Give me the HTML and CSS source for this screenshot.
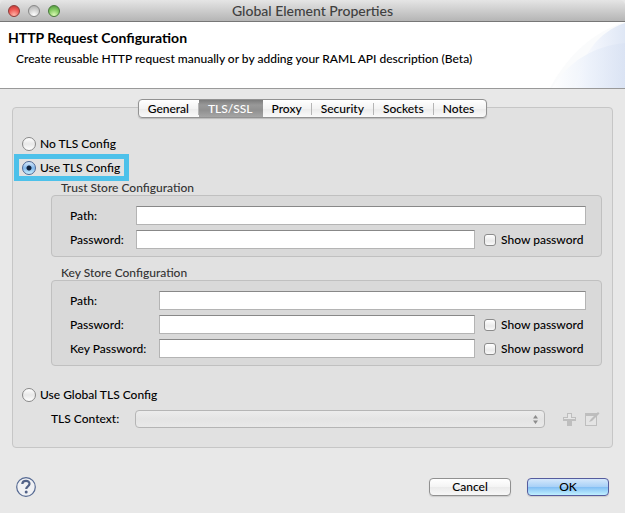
FILE: index.html
```html
<!DOCTYPE html>
<html lang="en">
<head>
<meta charset="utf-8">
<title>Global Element Properties</title>
<link rel="stylesheet" href="styles.css">
</head>
<body>
<div class="window">
  <header class="titlebar">
    <div class="lights">
      <button class="light light-close" aria-label="Close"></button>
      <button class="light light-min" aria-label="Minimize"></button>
      <button class="light light-zoom" aria-label="Zoom"></button>
    </div>
    <span class="window-title">Global Element Properties</span>
  </header>
  <section class="banner">
    <svg class="swoosh" width="75" height="66" viewBox="0 0 75 66" aria-hidden="true">
      <defs>
        <linearGradient id="fade"><stop offset="0" stop-color="#fff"/><stop offset=".5" stop-color="#eff3fb"/><stop offset="1" stop-color="#dfe7f5"/></linearGradient>
        <linearGradient id="deep"><stop offset="0" stop-color="#fff"/><stop offset=".5" stop-color="#eaf0fa"/><stop offset="1" stop-color="#d9e2f3"/></linearGradient>
      </defs>
      <path d="M0 66C16 36 42 10 75 0V66Z" fill="#fafbfc"/>
      <path d="M24 66C31 34 48 10 75 1V66Z" fill="url(#fade)"/>
      <path d="M2 66C18 40 43 24 75 21V66Z" fill="url(#deep)" opacity=".75"/>
    </svg>
    <h1>HTTP Request Configuration</h1>
    <p>Create reusable HTTP request manually or by adding your RAML API description (Beta)</p>
  </section>
  <main class="content">
    <nav class="tabs">
      <button class="tab">General</button>
      <button class="tab active">TLS/SSL</button>
      <button class="tab">Proxy</button>
      <button class="tab">Security</button>
      <button class="tab">Sockets</button>
      <button class="tab">Notes</button>
    </nav>
    <form class="panel" id="config">
      <label class="option"><input type="radio" name="tls"><span>No TLS Config</span></label>
      <label class="option highlighted"><input type="radio" name="tls" checked><span>Use TLS Config</span></label>
      <section class="store">
        <h2>Trust Store Configuration</h2>
        <div class="group trust">
          <label for="tpath">Path:</label><input class="field wide" id="tpath" type="text">
          <label for="tpass">Password:</label><input class="field" id="tpass" type="password">
          <label class="show"><input type="checkbox"><span>Show password</span></label>
        </div>
      </section>
      <section class="store">
        <h2>Key Store Configuration</h2>
        <div class="group key">
          <label for="kpath">Path:</label><input class="field wide" id="kpath" type="text">
          <label for="kpass">Password:</label><input class="field" id="kpass" type="password">
          <label class="show"><input type="checkbox"><span>Show password</span></label>
          <label for="kkey">Key Password:</label><input class="field" id="kkey" type="password">
          <label class="show"><input type="checkbox"><span>Show password</span></label>
        </div>
      </section>
      <label class="option global"><input type="radio" name="tls"><span>Use Global TLS Config</span></label>
      <div class="context">
        <label for="context">TLS Context:</label>
        <div class="select-wrap">
          <select id="context" disabled><option></option></select>
          <svg class="arrows" width="5" height="9" viewBox="0 0 5 9" aria-hidden="true"><path d="M2.500 0L5 3.500H0ZM0 5.500H5L2.500 9Z" fill="#8c8c8c"/></svg>
        </div>
        <button class="tool" type="button" aria-label="Add" disabled><svg width="14" height="14" viewBox="0 0 14 14"><path d="M5 1H10V5H14V9H10V14H5V9H1V5H5Z" fill="#bebebe"/><path d="M6 2H9V6H13V7H2V6H6Z" fill="#e6e6e6"/></svg></button>
        <button class="tool" type="button" aria-label="Edit" disabled><svg width="16" height="14" viewBox="0 0 16 14"><path d="M1 1H13V14H1Z" fill="#bebebe"/><path d="M2 4H12V13H2Z" fill="#e4e4e4"/><path d="M5 10L7 7L14 0L15.500 1.500L8 9Z" fill="#bcbcbc"/></svg></button>
      </div>
    </form>
  </main>
  <footer class="footer">
    <button class="help" aria-label="Help"><svg width="20" height="20" viewBox="0 0 20 20"><circle cx="10" cy="10" r="9.300" fill="#f0f1f4" stroke="#566a93" stroke-width="1.200"/><path d="M6.300 7C6.400 2.800 13.700 2.800 13.500 6.900C13.400 9.300 10.200 9.300 10.200 12" fill="none" stroke="#526287" stroke-width="2.200"/><circle cx="10.200" cy="15" r="1.500" fill="#526287"/></svg></button>
    <button class="push">Cancel</button>
    <button class="push primary">OK</button>
  </footer>
</div>
</body>
</html>
```
FILE: styles.css
```css
* { box-sizing: border-box; }
body {
  margin: 0;
  background: #e8e8e8;
  color: #000;
  font: 500 12px/16px Lato, "Noto Sans", sans-serif;
}
button, input, select { margin: 0; padding: 0; font: inherit; color: inherit; }
.window { display: flex; flex-direction: column; min-height: 100vh; }

.titlebar {
  display: grid;
  grid-template-columns: 1fr auto 1fr;
  align-items: center;
  height: 22px;
  padding: 0 8px;
  border-bottom: 1px solid #777;
  border-radius: 5px 5px 0 0;
  background: linear-gradient(#e5e5e5, #b5b5b5);
}
.lights { display: flex; gap: 8px; }
.light {
  width: 12px;
  height: 12px;
  border: 1px solid #888;
  border-radius: 50%;
  background: radial-gradient(circle at 50% 90%, #fff, #ccc 60%, #aaa);
}
.light-close { border-color: #8d3b38; background: radial-gradient(circle at 50% 90%, #ffb5a8, #ee5954 55%, #b93431); }
.light-zoom { border-color: #47793a; background: radial-gradient(circle at 50% 90%, #dcfab5, #82c961 55%, #4b9038); }
.window-title { color: #404040; font-size: 14px; }

.banner {
  position: relative;
  height: 67px;
  padding: 8px;
  border-bottom: 1px solid #999;
  background: #fff;
}
.swoosh { position: absolute; top: 0; right: 0; }
.banner h1 { margin: 0; font-size: 14px; line-height: 16px; }
.banner p { position: relative; margin: 5px 8px 0; }

.content { padding: 10px 12px 0; }
.tabs {
  position: relative;
  display: flex;
  width: max-content;
  height: 19px;
  margin: 0 auto -11px;
  border: 1px solid #929292;
  border-radius: 4px;
  background: linear-gradient(#fff, #f3f3f3 50%, #ebebeb 52%, #fafafa);
  box-shadow: 0 1px 1px #bbb;
}
.tab {
  padding: 0 10px 0 9px;
  border: 0;
  background: linear-gradient(#b5b5b5, #b5b5b5) right / 1px 12px no-repeat;
  line-height: 16px;
}
.tab:last-child { padding-right: 12px; background: none; }
.tab.active { background: linear-gradient(#7c7c7c, #999 30%, #909090 60%, #a5a5a5); color: #fff; }

.panel {
  padding: 27px 10px 19px 9px;
  border: 1px solid #c6c6c6;
  border-radius: 4px;
  background: #e1e1e1;
}
.option { display: flex; align-items: center; gap: 4px; width: max-content; height: 17px; }
input[type="radio"] {
  appearance: none;
  flex: none;
  width: 14px;
  height: 14px;
  border: 1px solid #888;
  border-radius: 50%;
  background: linear-gradient(#fff, #e8e8e8 50%, #fff);
}
input[type="radio"]:checked {
  border-color: #4c6794;
  background: radial-gradient(circle, #10213b 2px, transparent 3px), linear-gradient(#d7e9fb, #82b8ec 50%, #c8f0ff);
}
.highlighted {
  height: 27px;
  margin: 2px 0 0 -8px;
  padding: 0 4px 0 3px;
  border: 5px solid #4dc1ea;
}
.store { margin: 0 0 9px 29px; }
.store h2 { margin: 0 0 0 10px; font-size: 12px; font-weight: 500; line-height: 14px; color: #333; }
.group {
  display: grid;
  grid-auto-rows: 19px;
  row-gap: 5px;
  align-items: center;
  padding: 10px 15px 7px 18px;
  border: 1px solid #c0c0c0;
  border-radius: 4px;
  background: #d9d9d9;
}
.trust { grid-template-columns: 66px 1fr 111px; }
.key { grid-template-columns: 89px 1fr 111px; }
.field {
  width: 100%;
  height: 19px;
  border: 1px solid #b4b4b4;
  border-top-color: #888;
  background: #fff;
}
.wide { grid-column: 2 / 4; }
.show { display: flex; align-items: center; gap: 5px; margin-left: 9px; white-space: nowrap; }
input[type="checkbox"] {
  appearance: none;
  flex: none;
  width: 12px;
  height: 12px;
  border: 1px solid #8c8c8c;
  border-radius: 3px;
  background: linear-gradient(#fff, #eaeaea 60%, #fafafa);
}
.global { margin-top: 20px; }
.context { display: flex; align-items: center; height: 19px; margin: 6px 2px 0 29px; }
.context > label { width: 84px; }
.select-wrap { position: relative; flex: 1; margin-right: 17px; }
.select-wrap select {
  display: block;
  appearance: none;
  width: 100%;
  height: 18px;
  border: 1px solid #b5b5b5;
  border-radius: 4px;
  background: linear-gradient(#ececec, #e4e4e4 50%, #e9e9e9);
  opacity: 1;
}
.arrows { position: absolute; top: 5px; right: 7px; }
.tool { display: flex; border: 0; background: none; }
.tool + .tool { margin-left: 8px; }

.footer { display: flex; align-items: center; gap: 16px; padding: 29px 16px 15px; }
.help { display: flex; margin-right: auto; border: 0; background: none; }
.push {
  width: 82px;
  height: 18px;
  border: 1px solid #909090;
  border-radius: 4px;
  background: linear-gradient(#fff, #f4f4f4 50%, #ebebeb 52%, #f7f7f7);
  box-shadow: 0 1px 1px #ccc;
  line-height: 16px;
}
.primary {
  border-color: #565c9e;
  background: linear-gradient(#d5e8fb, #a9d1f7 48%, #83bff4 52%, #c0f0ff);
}
```
